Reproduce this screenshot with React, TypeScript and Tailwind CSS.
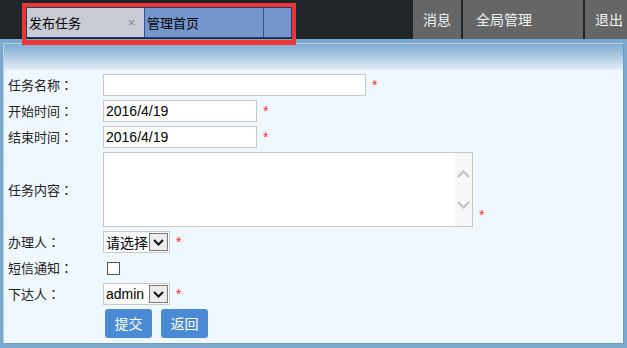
import React from 'react';

const cjk = "font-['Noto_Sans_CJK_SC',sans-serif]";
const latin = "font-['Liberation_Sans','Noto_Sans_CJK_SC',sans-serif]";

const Star = ({ className = '' }: { className?: string }) => (
  <span className={`ml-[6px] text-[14px] leading-none text-[#ff2a2a] ${latin} ${className}`}>*</span>
);

const Chevron = ({ up = false }: { up?: boolean }) => (
  <svg width="13" height="8" viewBox="0 0 13 8">
    <path
      d={up ? 'M1 7 L6.5 1.5 L12 7' : 'M1 1 L6.5 6.5 L12 1'}
      fill="none"
      stroke="#c2c2c2"
      strokeWidth="2"
    />
  </svg>
);

const SelectBox = ({ value }: { value: string }) => (
  <div className="flex h-[22px] w-[67px] items-center border border-[#c9c9c9] bg-white pl-[2px]">
    <span className={`flex-1 text-[14px] leading-none text-black ${value === 'admin' ? latin : cjk}`}>{value}</span>
    <span className="mr-[1px] flex h-[18px] w-[19px] items-center justify-center border border-[#7a7a7a] bg-[#ececec]">
      <svg width="11" height="7" viewBox="0 0 11 7">
        <path d="M1 1 L5.5 5.5 L10 1" fill="none" stroke="#111" strokeWidth="2" />
      </svg>
    </span>
  </div>
);

const Label = ({ text }: { text: string }) => (
  <div className={`w-[95px] text-[13px] text-[#222] ${cjk}`}>
    {text}
    <span className="font-['Noto_Sans_CJK_TC',sans-serif]">：</span>
  </div>
);

const Row = ({ label, children }: { label: string; children: React.ReactNode }) => (
  <div className="flex h-[22px] items-center">
    <Label text={label} />
    {children}
  </div>
);

const App = () => {
  return (
    <div className="relative flex h-[348px] w-[627px] flex-col overflow-hidden bg-[#8cb1d2]">
      <div className="flex h-[39px] shrink-0 bg-[#1f2528]">
        <div className="ml-[26px] mt-[7px] flex h-[31px] w-[266px] border border-[#2b3a66]">
          <div className="flex w-[117px] items-center justify-between bg-[#c9cbd5] pl-[2px] pr-[9px]">
            <span className={`text-[13px] text-black ${cjk}`}>发布任务</span>
            <span className={`text-[12px] text-[#888] ${latin}`}>×</span>
          </div>
          <div className="flex w-[119px] items-center border-l border-[#3c5193] bg-[#7596cc] pl-[2px]">
            <span className={`text-[13px] text-black ${cjk}`}>管理首页</span>
          </div>
          <div className="flex-1 border-l border-[#3c5193] bg-[#7596cc]" />
        </div>
        <div className="ml-auto flex">
          <div className={`flex w-[48px] items-center justify-center bg-[#666] text-[14px] text-[#eef4f4] ${cjk}`}>消息</div>
          <div className={`ml-[2px] flex w-[120px] items-center bg-[#666] pl-[13px] text-[14px] text-[#eef4f4] ${cjk}`}>全局管理</div>
          <div className={`ml-[2px] flex w-[42px] items-center bg-[#666] pl-[10px] text-[14px] text-[#eef4f4] ${cjk}`}>退出</div>
        </div>
      </div>

      <div className="absolute left-[22px] top-[3px] h-[42px] w-[274px] border-[4px] border-b-[5px] border-[#ee3535]" />

      <div className="flex flex-1 bg-[#7ba8cc] pb-[5px] pl-[3px] pr-[4px] pt-[4px]">
        <div className="flex flex-1 flex-col border-l border-t border-[#b3d0e7] bg-[#f0f8ff] shadow-[1px_1px_0_#6f9cc2]">
          <div className="h-[26px] bg-gradient-to-b from-[#80abd1] to-[#e4eef8]" />
          <div className="flex flex-col gap-[4px] pl-[4px] pt-[4px]">
            <Row label="任务名称">
              <div className="h-[22px] w-[263px] border border-[#c9c9c9] bg-white" />
              <Star />
            </Row>
            <Row label="开始时间">
              <div className={`flex h-[22px] w-[154px] items-center border border-[#c9c9c9] bg-white pl-[2px] text-[14px] text-black ${latin}`}>2016/4/19</div>
              <Star />
            </Row>
            <Row label="结束时间">
              <div className={`flex h-[22px] w-[154px] items-center border border-[#c9c9c9] bg-white pl-[2px] text-[14px] text-black ${latin}`}>2016/4/19</div>
              <Star />
            </Row>
            <div className="flex h-[75px] items-center">
              <Label text="任务内容" />
              <div className="flex h-[75px] w-[370px] border border-[#c9c9c9] bg-white">
                <div className="flex-1" />
                <div className="flex w-[17px] flex-col items-center justify-around bg-[#f7f7f7] py-[6px]">
                  <Chevron up />
                  <Chevron />
                </div>
              </div>
              <Star className="mt-[50px]" />
            </div>
            <Row label="办理人">
              <SelectBox value="请选择" />
              <Star />
            </Row>
            <Row label="短信通知">
              <div className="ml-[4px] h-[13px] w-[13px] border border-[#555] bg-white" />
            </Row>
            <Row label="下达人">
              <SelectBox value="admin" />
              <Star />
            </Row>
            <div className="flex gap-[9px] pl-[97px]">
              <button className={`h-[29px] w-[47px] rounded-[3px] bg-[#4b8ad5] text-[14px] text-white ${cjk}`}>提交</button>
              <button className={`h-[29px] w-[47px] rounded-[3px] bg-[#4b8ad5] text-[14px] text-white ${cjk}`}>返回</button>
            </div>
          </div>
        </div>
      </div>
    </div>
  );
};

export default App;
